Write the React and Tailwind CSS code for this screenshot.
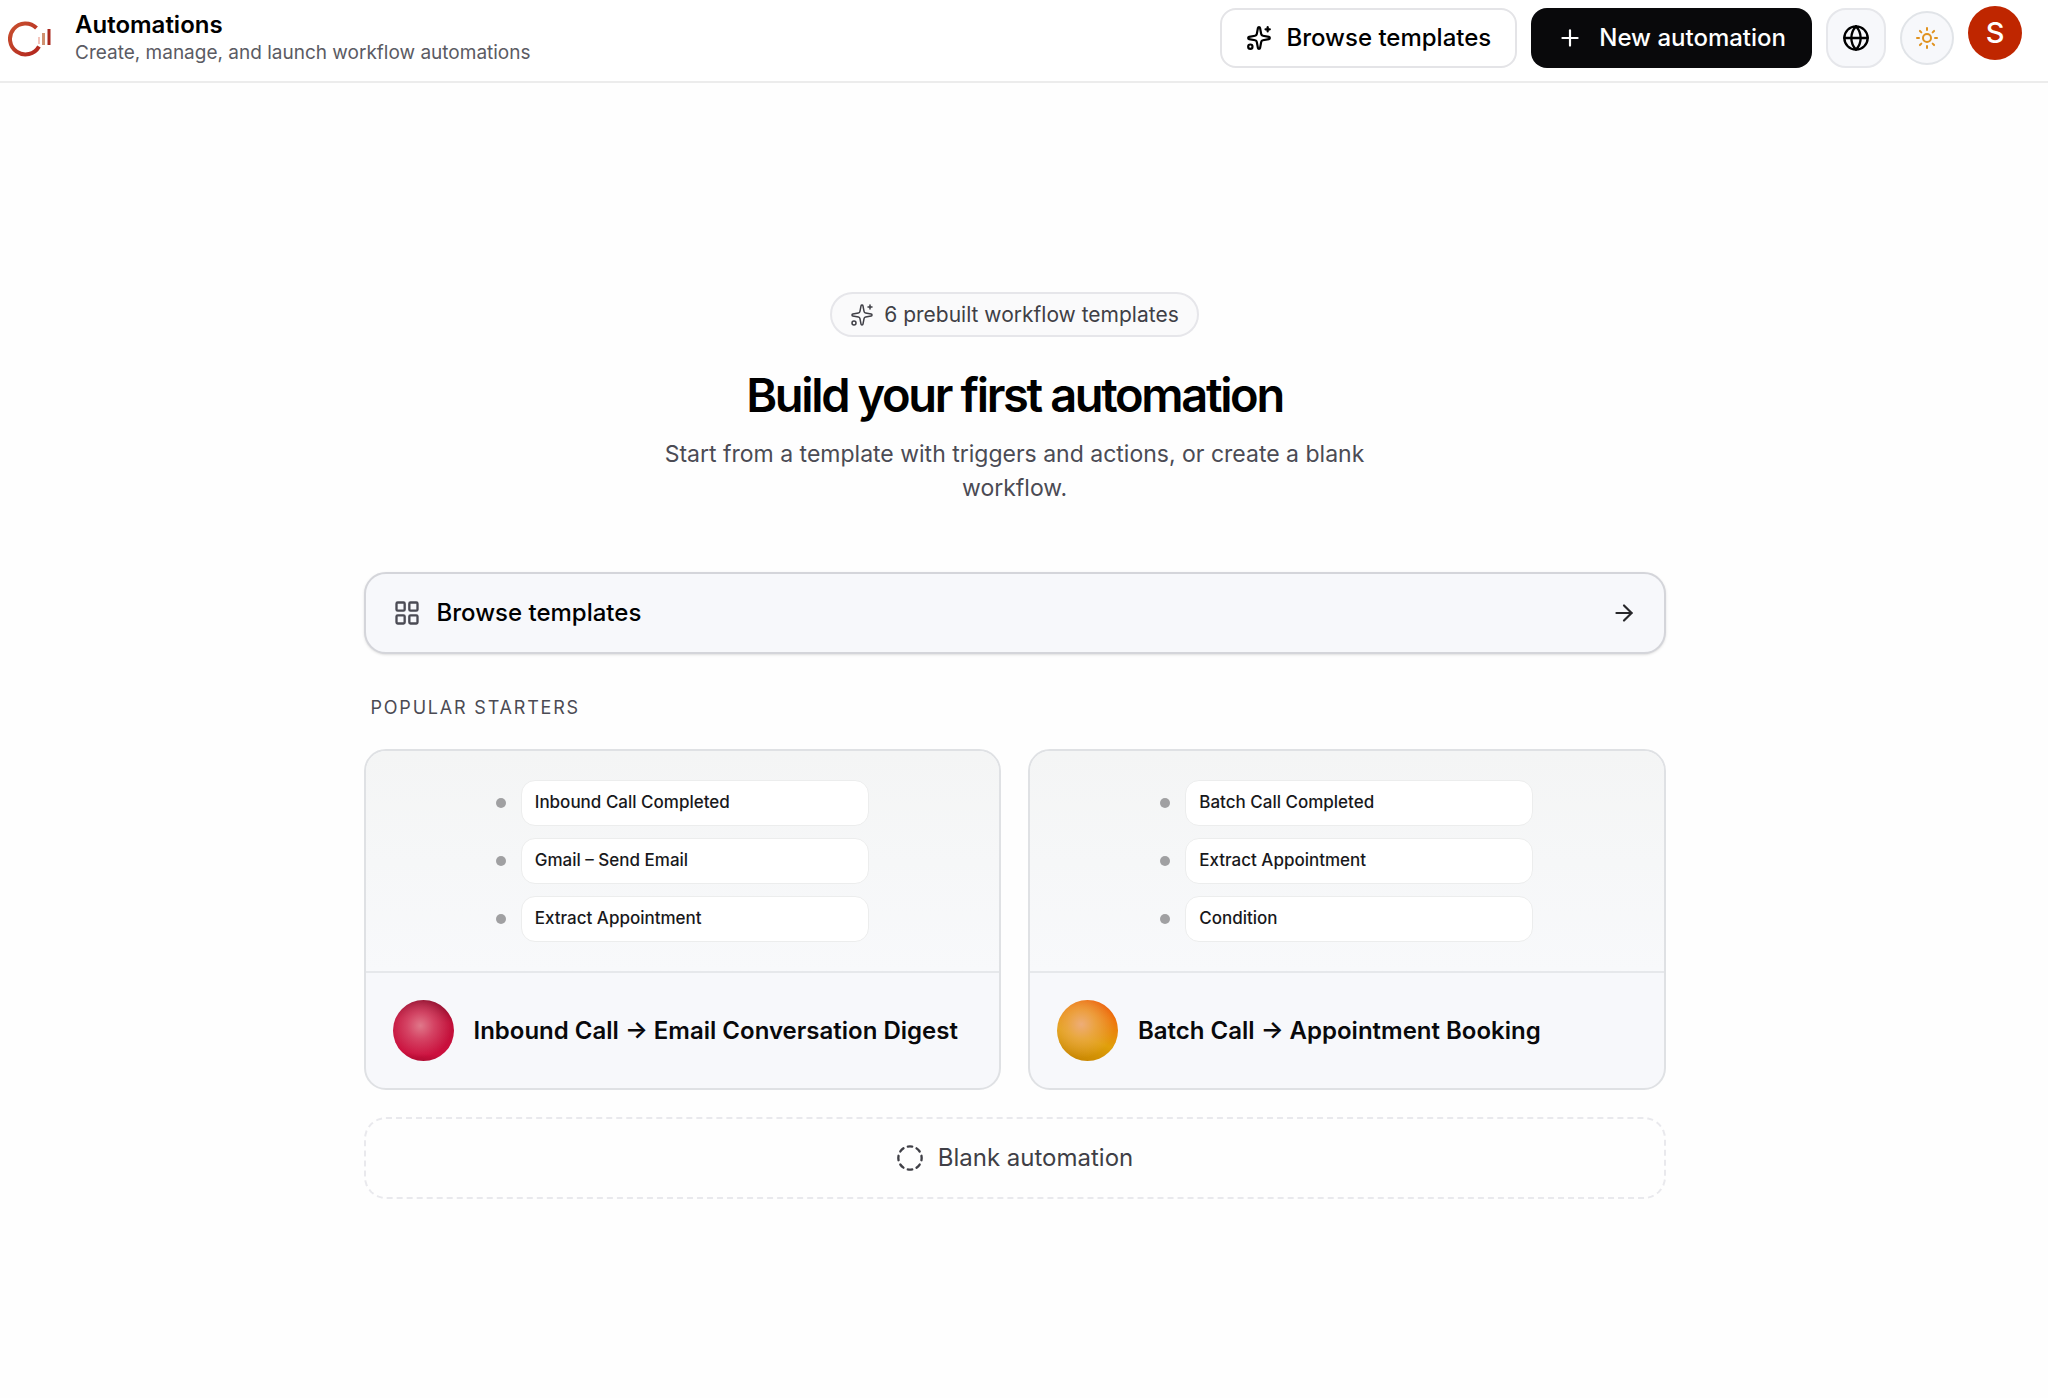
import React from 'react';
import { ArrowRight, CircleDashed, Globe, LayoutGrid, Plus, Sparkles, Sun } from 'lucide-react';

const starters = [
    {
        title: 'Inbound Call → Email Conversation Digest',
        steps: ['Inbound Call Completed', 'Gmail – Send Email', 'Extract Appointment'],
        orb: 'bg-[radial-gradient(circle_at_45%_42%,#e0788a_0%,#d9506ecc_28%,#d0204800_65%),linear-gradient(185deg,#7d0824_0%,#c00f38_35%,#cc103e_85%,#a80c30_100%)]',
    },
    {
        title: 'Batch Call → Appointment Booking',
        steps: ['Batch Call Completed', 'Extract Appointment', 'Condition'],
        orb: 'bg-[radial-gradient(circle_at_40%_40%,#eead78_0%,#ecab50bb_28%,#e8a02000_65%),linear-gradient(200deg,#ec4c08_0%,#ee780c_28%,#e0a00a_60%,#c07e00_100%)]',
    },
];

function Logo() {
    return (
        <svg viewBox="0 0 46 40" className="h-10 w-[46px]" fill="none" aria-hidden="true">
            <defs>
                <linearGradient id="logo-ring" x1="0" y1="0" x2="1" y2="1">
                    <stop offset="0" stopColor="#c8502f" />
                    <stop offset="1" stopColor="#b3261e" />
                </linearGradient>
            </defs>
            <path d="M28.5 11A15.500 15.500 0 1 0 31 29.500" stroke="url(#logo-ring)" strokeWidth="4" />
            <path d="M31 20v7" stroke="#f3c4bb" strokeWidth="2" />
            <path d="M35.500 16v12" stroke="#cf9271" strokeWidth="3" />
            <path d="M41 12v16" stroke="#a8281e" strokeWidth="3" />
        </svg>
    );
}

function Header() {
    return (
        <header className="flex h-[83px] items-start justify-between border-b-2 border-[#ececec] bg-white pr-[26px] pl-2">
            <div className="flex items-center gap-[21px] pt-[9px]">
                <Logo />
                <div>
                    <h1 className="text-[24px] leading-8 font-semibold text-black">Automations</h1>
                    <p className="text-[19px] leading-6 text-[#5b5b63]">Create, manage, and launch workflow automations</p>
                </div>
            </div>
            <div className="flex items-start gap-[14px] pt-2">
                <button className="flex h-[60px] items-center gap-[14px] rounded-2xl border-2 border-[#e4e4e7] bg-white px-6 text-[24px] font-medium text-black">
                    <Sparkles className="size-[26px]" />
                    Browse templates
                </button>
                <button className="flex h-[60px] items-center gap-4 rounded-2xl bg-[#09090b] px-[26px] text-[24px] font-medium text-white">
                    <Plus className="size-[26px]" />
                    New automation
                </button>
                <button aria-label="Language" className="flex size-[60px] items-center justify-center rounded-[20px] border-2 border-[#e6e7eb] bg-[#f7f8fb] text-black">
                    <Globe className="size-7" />
                </button>
                <button aria-label="Toggle theme" className="mt-[3px] flex size-[54px] items-center justify-center rounded-full border-2 border-[#e1e4e8] bg-[#f7f8fb] text-[#e0921f]">
                    <Sun className="size-6" />
                </button>
                <button aria-label="Account" className="-mt-[2px] flex size-[54px] items-center justify-center rounded-full bg-[#bf2600] text-[29px] font-medium text-white">
                    S
                </button>
            </div>
        </header>
    );
}

function StarterCard({ title, steps, orb }) {
    return (
        <button className="flex flex-col overflow-hidden rounded-[22px] border-2 border-[#dfe1e4] bg-[#f7f8fb] text-left">
            <span className="flex w-full flex-col items-center gap-3 border-b-2 border-[#e6e8eb] bg-linear-to-b from-[#f4f5f5] to-[#f8f9fb] pt-[29px] pb-[29px]">
                {steps.map((step) => (
                    <span key={step} className="flex items-center gap-[15px]">
                        <span className="size-[10px] rounded-full bg-[#a0a0a2]" />
                        <span className="flex h-[46px] w-[348px] items-center rounded-[14px] border border-[#eceded] bg-white px-[13px] text-[17px] font-medium text-[#18181b]">
                            {step}
                        </span>
                    </span>
                ))}
            </span>
            <span className="flex items-center gap-5 px-[27px] pt-[27px] pb-[27px]">
                <span className={`size-[61px] shrink-0 rounded-full ${orb}`} />
                <span className="text-[24px] font-semibold text-[#09090b]">{title}</span>
            </span>
        </button>
    );
}

export default function App() {
    return (
        <div className="flex min-h-screen flex-col bg-[#fefefe] font-['Inter',sans-serif] antialiased">
            <Header />
            <main className="flex flex-1 flex-col items-center pt-[209px] pr-[19px]">
                <div className="flex h-[45px] items-center gap-[10px] rounded-full border-2 border-[#e6e6ea] bg-[#fafafb] px-[18px] text-[21px] text-[#3f3f46]">
                    <Sparkles className="size-6" strokeWidth={1.5} />
                    6 prebuilt workflow templates
                </div>
                <h2 className="mt-[31px] text-[47px] leading-[54px] font-semibold tracking-tighter text-black">Build your first automation</h2>
                <p className="mt-[15px] max-w-[740px] text-center text-[23px] leading-[34px] text-[#4b4b54]">
                    Start from a template with triggers and actions, or create a blank workflow.
                </p>

                <section className="mt-[67px] flex w-full max-w-[1302px] flex-col">
                    <button className="flex h-[82px] items-center gap-4 rounded-[22px] border-2 border-[#d4d5da] bg-[#f7f8fb] px-[27px] text-[24px] font-medium text-black shadow-sm">
                        <LayoutGrid className="size-7 text-[#4b4b54]" />
                        Browse templates
                        <ArrowRight className="ml-auto size-[26px] text-[#27272a]" />
                    </button>

                    <h3 className="mt-10 px-[7px] text-[18px] leading-7 tracking-widest text-[#4b4b54] uppercase">Popular starters</h3>

                    <div className="mt-[27px] grid grid-cols-2 gap-[27px]">
                        {starters.map((starter) => (
                            <StarterCard key={starter.title} {...starter} />
                        ))}
                    </div>

                    <button className="mt-[27px] flex h-[82px] items-center justify-center gap-[14px] rounded-[22px] border-2 border-dashed border-[#e9e9ed] text-[24px] text-[#3f3f46]">
                        <CircleDashed className="size-7" />
                        Blank automation
                    </button>
                </section>
            </main>
        </div>
    );
}
